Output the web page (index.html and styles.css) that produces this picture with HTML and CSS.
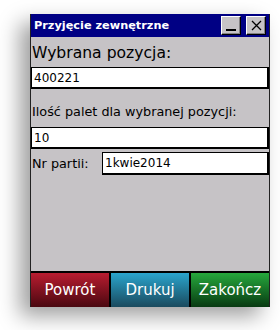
FILE: index.html
```html
<!DOCTYPE html>
<html lang="pl">
<head>
    <meta charset="UTF-8">
    <meta name="viewport" content="width=device-width, initial-scale=1.0">
    <title>Przyjęcie zewnętrzne</title>
    <link rel="stylesheet" href="styles.css">
</head>
<body>
    <div class="window">
        <div class="titlebar">
            <span class="title">Przyjęcie zewnętrzne</span>
            <div class="title-buttons">
                <button class="tb-btn minimize"><span class="min-line"></span></button>
                <button class="tb-btn close">
                    <svg width="11" height="11" viewBox="0 0 11 11">
                        <path d="M1 1 L10 10 M10 1 L1 10" stroke="#000" stroke-width="1.3"/>
                    </svg>
                </button>
            </div>
        </div>

        <div class="content">
            <div class="label big">Wybrana pozycja:</div>
            <div class="field">400221</div>
            <div class="label">Ilość palet dla wybranej pozycji:</div>
            <div class="field">10</div>
            <div class="row">
                <span class="label inline">Nr partii:</span>
                <div class="field small">1kwie2014</div>
            </div>
        </div>

        <div class="actions">
            <button class="action back">Powrót</button>
            <button class="action print">Drukuj</button>
            <button class="action finish">Zakończ</button>
        </div>
    </div>
</body>
</html>
```

FILE: styles.css
```css
body {
    margin: 0;
    background: #fff;
    font-family: "DejaVu Sans", sans-serif;
    width: 280px;
    height: 330px;
    overflow: hidden;
}
.window {
    margin: 14px 0 0 30px;
    width: 240px;
    height: 293px;
    display: flex;
    flex-direction: column;
    background: #c6c3c6;
    box-shadow: -10px 9px 20px rgba(0, 0, 0, 0.38);
    border-left: 1px solid #222;
    border-right: 1px solid #222;
    box-sizing: border-box;
}
.titlebar {
    height: 23px;
    background: #000084;
    display: flex;
    align-items: center;
    justify-content: space-between;
    padding: 0 3px 0 3px;
}
.title {
    color: #fff;
    font-weight: bold;
    font-size: 11.3px;
}
.title-buttons {
    display: flex;
    gap: 5px;
}
.tb-btn {
    width: 20px;
    height: 19px;
    padding: 0;
    margin: 0;
    background: #c6c3c6;
    border: 1px solid;
    border-color: #fff #000 #000 #fff;
    box-shadow: inset -1px -1px 0 #848284;
    display: flex;
    align-items: center;
    justify-content: center;
}
.min-line {
    display: block;
    width: 10px;
    height: 2px;
    background: #000;
    margin-top: 9px;
}
.content {
    flex: 1;
    padding: 4px 0 0 0;
}
.label {
    font-size: 12.8px;
    color: #000;
    padding-left: 1px;
}
.label.big {
    font-size: 15.6px;
    height: 26px;
    line-height: 24px;
}
.label.plain {
    height: 38px;
}
.content > .label:not(.big) {
    height: 38px;
    box-sizing: border-box;
    padding-top: 14px;
    line-height: 18px;
}
.field {
    height: 22px;
    box-sizing: border-box;
    background: #fff;
    border: 2px solid #000;
    border-top-width: 1px;
    border-left-width: 1px;
    font-size: 12px;
    line-height: 20px;
    padding-left: 2px;
}
.row {
    display: flex;
    align-items: center;
    margin-top: 3px;
    height: 23px;
}
.label.inline {
    width: 70px;
}
.field.small {
    flex: 1;
    height: 23px;
    line-height: 21px;
}
.actions {
    height: 34px;
    display: flex;
    gap: 2px;
    background: #000;
    border-top: 2px solid #000;
}
.action {
    flex: 1;
    border: none;
    margin: 0;
    padding: 0;
    color: #fff;
    font-family: "DejaVu Sans", sans-serif;
    font-size: 15px;
}
.back {
    background: linear-gradient(#b81c30, #4a0810);
}
.print {
    background: linear-gradient(#2aa4cc, #1a4a5e);
}
.finish {
    background: linear-gradient(#26a83c, #083a12);
}
```
